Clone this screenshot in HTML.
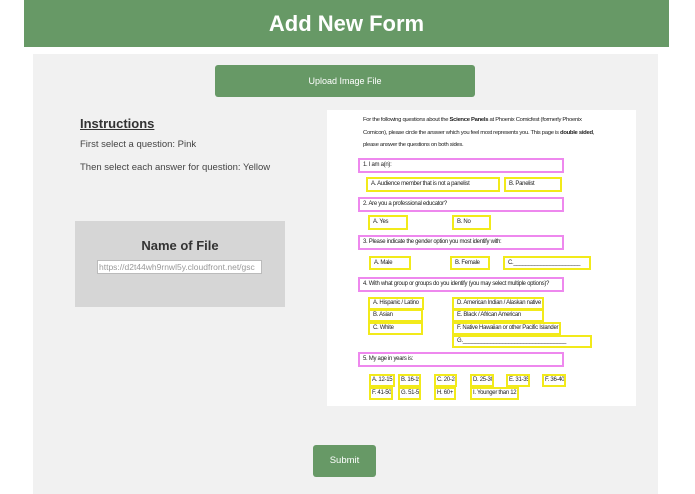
<!DOCTYPE html>
<html><head><meta charset="utf-8"><style>
*{margin:0;padding:0;box-sizing:border-box}
body{width:695px;height:494px;background:#fff;font-family:"Liberation Sans",sans-serif;position:relative;overflow:hidden}
.a{position:absolute}
.hdr{left:24px;top:0;width:645px;height:47px;background:#679966;color:#fff;font-weight:bold;font-size:22px;text-align:center;line-height:47px}
.panel{left:33px;top:54px;width:625px;height:440px;background:#f1f1f1}
.btn{background:#679966;color:#fff;border-radius:3px;text-align:center}
.p{border:2px solid #ee88ee;height:15px}
.y{border:2px solid #f2ea1a;height:14px}
.f{font-size:6px;letter-spacing:-0.3px;color:#222;line-height:11px;padding-left:3px;white-space:nowrap;overflow:hidden}
</style></head><body>
<div class="a hdr">Add New Form</div>
<div class="a panel"></div>
<div class="a btn" style="left:215px;top:65px;width:260px;height:32px;line-height:32px;font-size:9px">Upload Image File</div>
<div class="a" style="left:80px;top:116px;font-size:13px;font-weight:bold;text-decoration:underline;color:#333">Instructions</div>
<div class="a" style="left:80px;top:139px;font-size:9.5px;color:#444">First select a question: Pink</div>
<div class="a" style="left:80px;top:162px;font-size:9.5px;color:#444">Then select each answer for question: Yellow</div>
<div class="a" style="left:75px;top:221px;width:210px;height:86px;background:#d6d6d6"></div>
<div class="a" style="left:75px;top:238px;width:210px;text-align:center;font-size:13px;font-weight:bold;color:#333">Name of File</div>
<div class="a" style="left:97px;top:260px;width:165px;height:14px;background:#fff;border:1px solid #bbb;font-size:8.5px;color:#999;line-height:12px;overflow:hidden;white-space:nowrap;padding-left:1px">https://d2t44wh9rnwl5y.cloudfront.net/gsc</div>
<div class="a" style="left:327px;top:110px;width:309px;height:296px;background:#fff"></div>
<div class="a f" style="left:360px;top:114px;line-height:12.5px;white-space:normal;width:245px;font-size:5.9px">For the following questions about the <b>Science Panels</b> at Phoenix Comicfest (formerly Phoenix Comicon), please circle the answer which you feel most represents you. This page is <b>double sided</b>, please answer the questions on both sides.</div>
<div class="a p f" style="left:358px;top:158px;width:206px">1. I am a(n):</div>
<div class="a y f" style="left:366px;top:177px;width:134px;height:15px">A. Audience member that is not a panelist</div>
<div class="a y f" style="left:504px;top:177px;width:58px;height:15px">B. Panelist</div>
<div class="a p f" style="left:358px;top:197px;width:206px">2. Are you a professional educator?</div>
<div class="a y f" style="left:368px;top:215px;width:40px;height:15px">A. Yes</div>
<div class="a y f" style="left:452px;top:215px;width:39px;height:15px">B. No</div>
<div class="a p f" style="left:358px;top:235px;width:206px">3. Please indicate the gender option you most identify with:</div>
<div class="a y f" style="left:369px;top:256px;width:42px">A. Male</div>
<div class="a y f" style="left:450px;top:256px;width:40px">B. Female</div>
<div class="a y f" style="left:503px;top:256px;width:88px">C.______________________</div>
<div class="a p f" style="left:358px;top:277px;width:206px">4. With what group or groups do you identify (you may select multiple options)?</div>
<div class="a y f" style="left:368px;top:297px;width:56px;height:13px;line-height:9px">A. Hispanic / Latino</div>
<div class="a y f" style="left:368px;top:309px;width:55px;height:13px;line-height:9px">B. Asian</div>
<div class="a y f" style="left:368px;top:322px;width:55px;height:13px;line-height:9px">C. White</div>
<div class="a y f" style="left:452px;top:297px;width:92px;height:13px;line-height:9px">D. American Indian / Alaskan native</div>
<div class="a y f" style="left:452px;top:309px;width:92px;height:13px;line-height:9px">E. Black / African American</div>
<div class="a y f" style="left:452px;top:322px;width:109px;height:13px;line-height:9px">F. Native Hawaiian or other Pacific Islander</div>
<div class="a y f" style="left:452px;top:335px;width:140px;height:13px;line-height:9px">G.__________________________________</div>
<div class="a p f" style="left:358px;top:352px;width:206px">5. My age in years is:</div>
<div class="a y f" style="left:369px;top:374px;width:26px;height:13px;line-height:9px;padding-left:1px">A. 12-15</div>
<div class="a y f" style="left:398px;top:374px;width:23px;height:13px;line-height:9px;padding-left:1px">B. 16-19</div>
<div class="a y f" style="left:434px;top:374px;width:23px;height:13px;line-height:9px;padding-left:1px">C. 20-24</div>
<div class="a y f" style="left:470px;top:374px;width:24px;height:13px;line-height:9px;padding-left:1px">D. 25-30</div>
<div class="a y f" style="left:506px;top:374px;width:24px;height:13px;line-height:9px;padding-left:1px">E. 31-35</div>
<div class="a y f" style="left:542px;top:374px;width:24px;height:13px;line-height:9px;padding-left:1px">F. 36-40</div>
<div class="a y f" style="left:369px;top:387px;width:24px;height:13px;line-height:9px;padding-left:1px">F. 41-50</div>
<div class="a y f" style="left:398px;top:387px;width:23px;height:13px;line-height:9px;padding-left:1px">G. 51-55</div>
<div class="a y f" style="left:434px;top:387px;width:22px;height:13px;line-height:9px;padding-left:1px">H. 60+</div>
<div class="a y f" style="left:470px;top:387px;width:49px;height:13px;line-height:9px;padding-left:1px">I. Younger than 12</div>
<div class="a btn" style="left:313px;top:445px;width:63px;height:32px;line-height:32px;font-size:9.5px">Submit</div>
</body></html>
